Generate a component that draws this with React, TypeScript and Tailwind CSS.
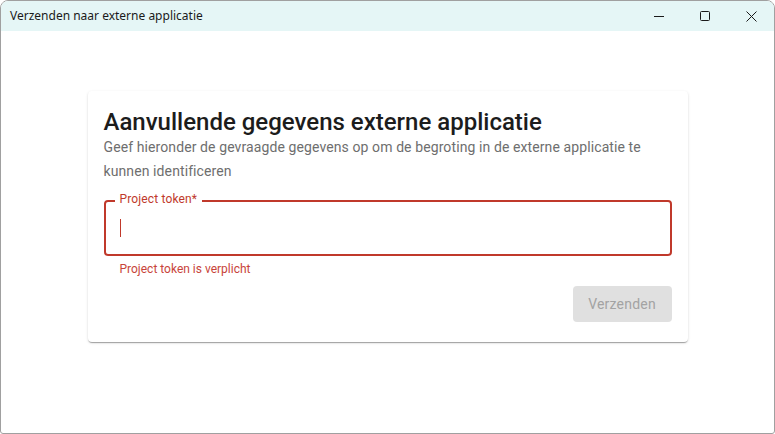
export default function App() {
    return (
        <div className="w-[775px] h-[434px] flex flex-col bg-white border border-[#a0a0a0] rounded-t-lg rounded-b-[3px] overflow-hidden" style={{ fontFamily: "Roboto, sans-serif" }}>
            {/* title bar */}
            <div className="h-[30px] shrink-0 flex items-center bg-[#e5f6f6]">
                <span className="pl-[9px] text-[12px] text-[#1a1a1a] flex-1" style={{ fontFamily: "'Noto Sans', sans-serif" }}>
                    Verzenden naar externe applicatie
                </span>
                <div className="flex h-full">
                    <div className="w-[46px] h-full flex items-center justify-center">
                        <svg width="10" height="10" viewBox="0 0 10 10"><path d="M0 5.5h10" stroke="#1a1a1a" strokeWidth="1" /></svg>
                    </div>
                    <div className="w-[46px] h-full flex items-center justify-center">
                        <svg width="10" height="10" viewBox="0 0 10 10"><rect x="0.5" y="0.5" width="9" height="9" rx="1" fill="none" stroke="#1a1a1a" strokeWidth="1" /></svg>
                    </div>
                    <div className="w-[46px] h-full flex items-center justify-center">
                        <svg width="11" height="11" viewBox="0 0 11 11"><path d="M0.5 0.5l10 10M10.5 0.5l-10 10" stroke="#1a1a1a" strokeWidth="1" /></svg>
                    </div>
                </div>
            </div>

            {/* content */}
            <div className="flex-1 flex justify-center pt-[60px]">
                <div className="w-[600px] h-[251px] bg-white rounded shadow-[0_2px_1px_-1px_rgba(0,0,0,0.2),0_1px_1px_0_rgba(0,0,0,0.14),0_1px_3px_0_rgba(0,0,0,0.12)] px-4 pt-[15px] flex flex-col">
                    <h2 className="text-[24px] leading-[32px] font-medium text-[#1c1c1c]">Aanvullende gegevens externe applicatie</h2>
                    <p className="-mt-[3px] text-[14px] leading-[24px] tracking-[0.1px] text-[#6e6e6e]">
                        Geef hieronder de gevraagde gegevens op om de begroting in de externe applicatie te kunnen identificeren
                    </p>

                    <div className="mt-[17px] relative">
                        <div className="h-[56px] border-2 border-[#c0392b] rounded flex items-center px-[14px]">
                            <span className="w-px h-[18px] bg-[#c0392b]" />
                        </div>
                        <span className="absolute left-[11px] -top-[9px] bg-white px-[5px] text-[12px] leading-[16px] tracking-[0.15px] text-[#c0392b]">Project token*</span>
                    </div>
                    <p className="mt-[3px] pl-4 text-[12px] leading-[20px] text-[#c8443a]">Project token is verplicht</p>

                    <div className="flex justify-end mt-[7px]">
                        <button className="w-[99px] h-[36px] rounded bg-[#e0e0e0] text-[14px] text-[#a3a3a3] tracking-[0.2px]">Verzenden</button>
                    </div>
                </div>
            </div>
        </div>
    );
}
